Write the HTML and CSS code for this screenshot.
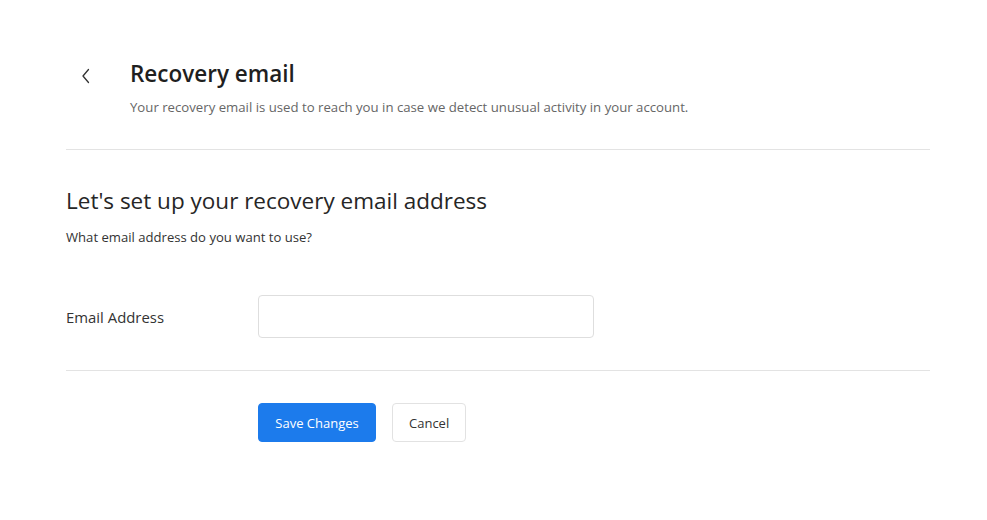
FILE: index.html
```html
<!DOCTYPE html>
<html lang="en">
<head>
<meta charset="utf-8">
<title>Recovery email</title>
<link rel="stylesheet" href="styles.css">
</head>
<body>
<main class="page">
  <header class="header">
    <a class="back" href="#" aria-label="Back">
      <svg width="10" height="16" viewBox="0 0 10 16" fill="none" stroke="#333" stroke-width="1.3" stroke-linecap="round" stroke-linejoin="round"><path d="M7.5 1.5 L2 8 L7.5 14.5"/></svg>
    </a>
    <div class="header-text">
      <h1 class="title">Recovery email</h1>
      <p class="subtitle">Your recovery email is used to reach you in case we detect unusual activity in your account.</p>
    </div>
  </header>
  <section class="section">
    <h2 class="section-title">Let's set up your recovery email address</h2>
    <p class="section-sub">What email address do you want to use?</p>
    <div class="form-row">
      <label class="label" for="email">Email Address</label>
      <input class="input" id="email" type="email">
    </div>
  </section>
  <div class="actions">
    <button class="btn btn-primary" type="button">Save Changes</button>
    <button class="btn btn-secondary" type="button">Cancel</button>
  </div>
</main>
</body>
</html>
```

FILE: styles.css
```css
* { box-sizing: border-box; }
html, body { margin: 0; padding: 0; background: #fff; }
body {
  font-family: "Open Sans", "Noto Sans", "Liberation Sans", sans-serif;
  color: #212529;
}
.page {
  padding: 0 57px 0 66px;
}
.header {
  display: flex;
  padding-top: 58px;
  padding-bottom: 32px;
  border-bottom: 1px solid #e3e3e3;
}
.back {
  width: 64px;
  padding-left: 15px;
  padding-top: 10px;
  display: block;
}
.back svg { display: block; }
.title {
  margin: 0;
  font-size: 22.5px;
  font-weight: 600;
  line-height: 32px;
  color: #1f1f1f;
}
.subtitle {
  margin: 7px 0 0;
  font-size: 13.2px;
  line-height: 20px;
  color: #666;
}
.section {
  padding-top: 36px;
  padding-bottom: 32px;
  border-bottom: 1px solid #e3e3e3;
}
.section-title {
  margin: 0;
  font-size: 22.5px;
  font-weight: 400;
  line-height: 30px;
  color: #262626;
}
.section-sub {
  margin: 12px 0 0;
  font-size: 13.1px;
  line-height: 18px;
  color: #333;
}
.form-row {
  display: flex;
  align-items: center;
  margin-top: 49px;
}
.label {
  width: 192px;
  font-size: 14.9px;
  color: #333;
}
.input {
  width: 336px;
  height: 43px;
  border: 1px solid #dedede;
  border-radius: 4px;
  padding: 0 12px;
  font: inherit;
  outline: none;
}
.actions {
  display: flex;
  gap: 16px;
  padding: 32px 0 0 192px;
}
.btn {
  height: 39px;
  border-radius: 4px;
  font-family: inherit;
  font-size: 13px;
  padding: 0 16px;
  cursor: pointer;
}
.btn-primary {
  width: 118px;
  background: #1c7bec;
  border: 1px solid #1c7bec;
  color: #fff;
}
.btn-secondary {
  width: 74px;
  background: #fff;
  border: 1px solid #e2e2e2;
  color: #333;
}
```
